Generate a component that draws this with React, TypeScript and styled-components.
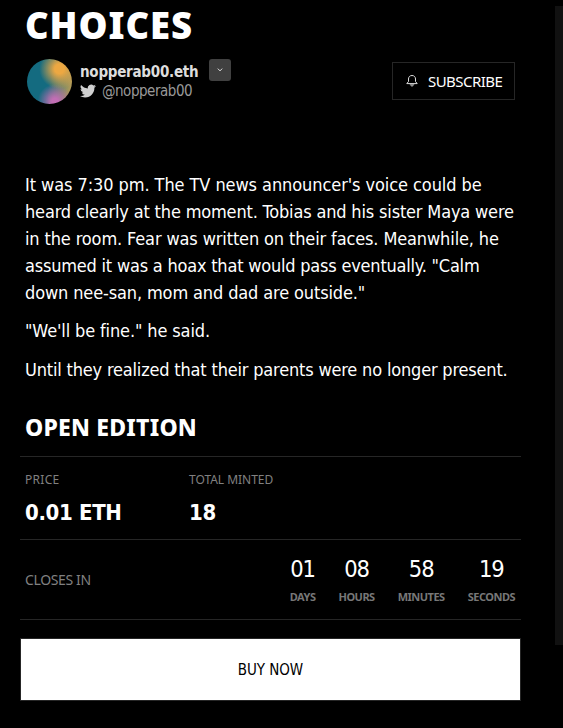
import React from 'react';
import styled, { createGlobalStyle } from 'styled-components';

const caps = '"Noto Sans", Tahoma, sans-serif';
const text = '"DejaVu Sans Condensed", Tahoma, sans-serif';

const GlobalStyle = createGlobalStyle`
  *, *::before, *::after { box-sizing: border-box; }
  body { margin: 0; background: #000; color: #fff; font-family: ${text}; }
  h1, h2, p, dl, dt, dd { margin: 0; }
  button { cursor: pointer; padding: 0; }
`;

const Page = styled.div`
  display: flex;
  justify-content: space-between;
  height: 728px;
  overflow: hidden;
`;

const Main = styled.main`
  width: 501px;
  margin-left: 20px;
`;

const ScrollThumb = styled.div`
  width: 8px;
  height: 639px;
  margin-top: 6px;
  background: #111;
`;

const Title = styled.h1`
  height: 59px;
  padding-left: 5px;
  font: 900 36.5px/50px ${caps};
  letter-spacing: 0.9px;
`;

const AuthorRow = styled.header`
  display: flex;
  height: 112px;
  padding: 0 6px 0 7px;
`;

const Avatar = styled.div`
  flex: none;
  width: 45px;
  height: 45px;
  border-radius: 50%;
  background:
    radial-gradient(circle at 72% 22%, #eda842 0 10%, rgba(237, 168, 66, 0) 42%),
    radial-gradient(circle at 62% 94%, #c16eb4 0 6%, rgba(193, 110, 180, 0) 34%),
    linear-gradient(100deg, #146b80 50%, #b09a58 92%);
`;

const Author = styled.div`
  display: flex;
  flex: none;
  flex-direction: column;
  width: 137px;
  padding: 4px 0 0 8px;
`;

const AuthorName = styled.span`
  color: #ddd;
  font: 700 15px/19px ${text};
  letter-spacing: -0.25px;
`;

const Handle = styled.span`
  display: flex;
  align-items: center;
  color: #999;
  font: 400 15px/19px ${text};
  letter-spacing: -0.47px;

  svg { margin: 0 6px 1px 0; flex: none; }
`;

const MoreButton = styled.button`
  display: grid;
  place-items: center;
  width: 22px;
  height: 22px;
  border: 0;
  border-radius: 3px;
  background: #404040;
`;

const SubscribeButton = styled.button`
  display: flex;
  align-items: center;
  width: 123px;
  height: 38px;
  margin: 3px 0 0 auto;
  padding-left: 12px;
  border: 1px solid #262626;
  background: #000;
  color: #fff;
  font: 400 15px/20px ${caps};
  letter-spacing: -0.55px;

  svg { margin-right: 9px; }
`;

const Story = styled.section`
  padding-left: 5px;
  height: 239px;
`;

const Paragraph = styled.p`
  font: 400 18px/27px ${text};
  white-space: nowrap;

  & + & { margin-top: 11px; }
  & + & + & { margin-top: 12px; }
`;

const Line = styled.span<{ $spacing: number }>`
  display: block;
  letter-spacing: ${({ $spacing }) => $spacing}px;
`;

const SectionTitle = styled.h2`
  height: 46px;
  padding-left: 5px;
  font: 800 23px/34px ${caps};
  letter-spacing: 0.2px;
`;

const Stats = styled.dl`
  display: grid;
  grid-template-columns: 164px 1fr;
  height: 83px;
  padding: 13px 5px 0;
  border-top: 1px solid #262626;
`;

const StatLabel = styled.dt<{ $spacing: number }>`
  color: #808080;
  font: 400 12px/20px ${caps};
  letter-spacing: ${({ $spacing }) => $spacing}px;
`;

const StatValue = styled.dd`
  padding-top: 8px;
  font: 700 22px/30px ${text};
  letter-spacing: -0.35px;
`;

const Countdown = styled.div`
  display: flex;
  align-items: center;
  height: 81px;
  padding: 0 6px 0 5px;
  border: solid #262626;
  border-width: 1px 0;
`;

const CountdownLabel = styled.span`
  margin-right: auto;
  color: #808080;
  font: 400 14px/20px ${caps};
  letter-spacing: -0.36px;
`;

const Unit = styled.div`
  display: flex;
  flex-direction: column;
  align-items: center;
  margin-left: 23px;
`;

const UnitValue = styled.span`
  font: 400 23.5px/34px ${text};
  letter-spacing: -1px;
`;

const UnitLabel = styled.span`
  color: #777;
  font: 700 11px/22px ${caps};
  letter-spacing: -0.5px;
`;

const BuyButton = styled.button`
  display: block;
  width: 100%;
  height: 63px;
  margin-top: 18px;
  border: 1px solid #262626;
  background: #fff;
  color: #000;
  font: 400 15px/20px ${text};
  letter-spacing: -0.06px;
`;

const TwitterIcon = () => (
  <svg width="16" height="16" viewBox="0 0 24 24" fill="#d0d0d0">
    <path d="M23.95 4.57a10 10 0 0 1-2.82.77 4.96 4.96 0 0 0 2.16-2.72c-.95.55-2 .95-3.13 1.18a4.92 4.92 0 0 0-8.38 4.48C7.69 8.1 4.07 6.13 1.64 3.16a4.92 4.92 0 0 0 1.52 6.57 4.9 4.9 0 0 1-2.23-.61v.06a4.92 4.92 0 0 0 3.95 4.83 5 5 0 0 1-2.21.08 4.94 4.94 0 0 0 4.6 3.42A9.87 9.87 0 0 1 0 19.54a13.99 13.99 0 0 0 7.55 2.21c9.05 0 14-7.5 14-13.98 0-.21 0-.42-.02-.63a9.94 9.94 0 0 0 2.42-2.57z" />
  </svg>
);

const BellIcon = () => (
  <svg width="14" height="14" viewBox="0 0 14 14" fill="none" stroke="#ddd" strokeWidth="1">
    <path d="M7 1.5C4.7 1.5 3.5 3.1 3.5 5v2.5L1.8 9.6h10.4l-1.7-2.1V5C10.5 3.1 9.3 1.5 7 1.5z" />
    <path d="M5 10.5h4L7 12.5z" fill="#aaa" stroke="#888" />
  </svg>
);

const ChevronIcon = () => (
  <svg width="6" height="4" viewBox="0 0 6 4" fill="none" stroke="#ddd">
    <path d="M.8.6 3 2.9 5.2.6" />
  </svg>
);

const story: { text: string; spacing: number }[][] = [
  [
    { text: "It was 7:30 pm. The TV news announcer's voice could be", spacing: -0.08 },
    { text: 'heard clearly at the moment. Tobias and his sister Maya were', spacing: -0.17 },
    { text: 'in the room. Fear was written on their faces. Meanwhile, he', spacing: -0.13 },
    { text: 'assumed it was a hoax that would pass eventually. "Calm', spacing: -0.21 },
    { text: 'down nee-san, mom and dad are outside."', spacing: -0.13 },
  ],
  [{ text: '"We\'ll be fine." he said.', spacing: -0.13 }],
  [{ text: 'Until they realized that their parents were no longer present.', spacing: -0.18 }],
];

const units = [
  ['01', 'DAYS'],
  ['08', 'HOURS'],
  ['58', 'MINUTES'],
  ['19', 'SECONDS'],
];

export default function App() {
  return (
    <Page>
      <GlobalStyle />
      <Main>
        <Title>CHOICES</Title>
        <AuthorRow>
          <Avatar />
          <Author>
            <AuthorName>nopperab00.eth</AuthorName>
            <Handle><TwitterIcon />@nopperab00</Handle>
          </Author>
          <MoreButton aria-label="More"><ChevronIcon /></MoreButton>
          <SubscribeButton><BellIcon />SUBSCRIBE</SubscribeButton>
        </AuthorRow>
        <Story>
          {story.map((lines, i) => (
            <Paragraph key={i}>
              {lines.map((line) => (
                <Line key={line.text} $spacing={line.spacing}>{line.text}</Line>
              ))}
            </Paragraph>
          ))}
        </Story>
        <SectionTitle>OPEN EDITION</SectionTitle>
        <Stats>
          <div>
            <StatLabel $spacing={0.3}>PRICE</StatLabel>
            <StatValue>0.01 ETH</StatValue>
          </div>
          <div>
            <StatLabel $spacing={-0.03}>TOTAL MINTED</StatLabel>
            <StatValue>18</StatValue>
          </div>
        </Stats>
        <Countdown>
          <CountdownLabel>CLOSES IN</CountdownLabel>
          {units.map(([value, label]) => (
            <Unit key={label}>
              <UnitValue>{value}</UnitValue>
              <UnitLabel>{label}</UnitLabel>
            </Unit>
          ))}
        </Countdown>
        <BuyButton>BUY NOW</BuyButton>
      </Main>
      <ScrollThumb />
    </Page>
  );
}
